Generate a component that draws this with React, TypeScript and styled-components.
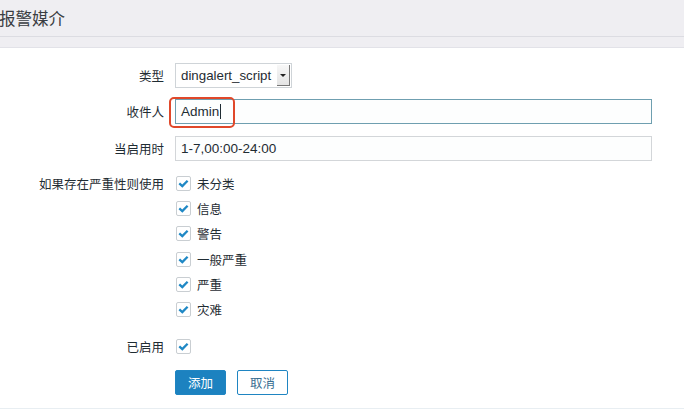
import styled, { createGlobalStyle } from "styled-components"

const GlobalStyle = createGlobalStyle`
    html, body {
        margin: 0;
        padding: 0;
        background: #ffffff;
    }
    body {
        font-family: "Liberation Sans", "Noto Sans CJK SC", sans-serif;
        color: #1f2c33;
    }
`

const Page = styled.div`
    width: 684px;
    height: 412px;
    overflow: hidden;
    background: #ffffff;
`

const Header = styled.div`
    height: 36px;
    background: #efeef2;
    border-bottom: 1px solid #dcdce2;
    display: flex;
    align-items: center;
`

const Title = styled.h1`
    margin: 0;
    margin-left: -1px;
    font-size: 16.5px;
    font-weight: 400;
    color: #3a3d42;
    font-family: "Noto Sans CJK SC", sans-serif;
`

const SubBar = styled.div`
    height: 10px;
    background: #efeef2;
    border-bottom: 1px solid #e2e2e8;
`

const FormArea = styled.div`
    height: 361px;
    border-bottom: 1px solid #e8eef2;
    padding-top: 15px;
    box-sizing: border-box;
`

const Row = styled.div<{ $gap?: number }>`
    display: grid;
    grid-template-columns: 164px 1fr;
    column-gap: 11px;
    align-items: start;
    margin-bottom: ${(p) => p.$gap ?? 11}px;
`

const Label = styled.div`
    text-align: right;
    font-size: 12.5px;
    line-height: 25px;
    color: #1f2c33;
    font-family: "Noto Sans CJK SC", sans-serif;
`

const SelectBox = styled.div`
    width: 117px;
    height: 25px;
    box-sizing: border-box;
    border: 1px solid #cfd4d8;
    background: #ffffff;
    display: flex;
    align-items: center;
    justify-content: space-between;
    padding-left: 5px;
    font-size: 13.3px;
    color: #1f2c33;
`

const SelectArrow = styled.div`
    width: 13px;
    height: 21px;
    margin-right: 1px;
    box-sizing: border-box;
    background: linear-gradient(#f7f7f7, #e4e4e4);
    border-right: 1px solid #777;
    border-bottom: 1px solid #777;
    display: flex;
    align-items: center;
    justify-content: center;

    &::after {
        content: "";
        border-left: 3px solid transparent;
        border-right: 3px solid transparent;
        border-top: 3px solid #222;
    }
`

const InputWrap = styled.div`
    position: relative;
    width: 477px;
`

const TextInput = styled.div<{ $focused?: boolean }>`
    width: 477px;
    height: 25px;
    box-sizing: border-box;
    border: 1px solid ${(p) => (p.$focused ? "#6f9fb0" : "#d3d6d9")};
    background: #fdfefe;
    display: flex;
    align-items: center;
    padding-left: 5px;
    font-size: 13.5px;
    color: #1f2c33;
`

const Caret = styled.span`
    display: inline-block;
    width: 1px;
    height: 15px;
    background: #1f2c33;
    margin-left: 1px;
`

const Highlight = styled.div`
    position: absolute;
    left: -6px;
    top: -2px;
    width: 66px;
    height: 31px;
    box-sizing: border-box;
    border: 2px solid #e0482a;
    border-radius: 5px;
    pointer-events: none;
`

const CheckList = styled.div`
    display: flex;
    flex-direction: column;
`

const CheckItem = styled.div`
    display: flex;
    align-items: center;
    height: 25.2px;
    gap: 6px;
    font-size: 12.5px;
    font-family: "Noto Sans CJK SC", sans-serif;
    color: #1f2c33;
`

const Box = styled.span`
    width: 15px;
    height: 15px;
    box-sizing: border-box;
    border: 1px solid #c9ced2;
    border-radius: 2px;
    background: #ffffff;
    display: inline-flex;
    align-items: center;
    justify-content: center;
    margin-left: 1px;
`

const Buttons = styled.div`
    display: flex;
    gap: 11px;
`

const Button = styled.button<{ $primary?: boolean }>`
    width: 51px;
    height: 25px;
    box-sizing: border-box;
    border: 1px solid #1f85c2;
    border-radius: 2px;
    background: ${(p) => (p.$primary ? "#1c82c0" : "#ffffff")};
    color: ${(p) => (p.$primary ? "#ffffff" : "#3a6f92")};
    font-size: 12.5px;
    font-family: "Noto Sans CJK SC", sans-serif;
    padding: 0;
    cursor: pointer;
`

function Check() {
    return (
        <Box>
            <svg width="11" height="9" viewBox="0 0 11 9">
                <path d="M1.3 4.4 L4.3 7.1 L9.6 1.7" fill="none" stroke="#1f88c5" strokeWidth="2.3" />
            </svg>
        </Box>
    )
}

const severities = ["未分类", "信息", "警告", "一般严重", "严重", "灾难"]

export default function App() {
    return (
        <Page>
            <GlobalStyle />
            <Header>
                <Title>报警媒介</Title>
            </Header>
            <SubBar />
            <FormArea>
                <Row>
                    <Label>类型</Label>
                    <SelectBox>
                        dingalert_script
                        <SelectArrow />
                    </SelectBox>
                </Row>
                <Row $gap={12}>
                    <Label>收件人</Label>
                    <InputWrap>
                        <TextInput $focused>
                            Admin<Caret />
                        </TextInput>
                        <Highlight />
                    </InputWrap>
                </Row>
                <Row $gap={10}>
                    <Label>当启用时</Label>
                    <TextInput>1-7,00:00-24:00</TextInput>
                </Row>
                <Row $gap={12}>
                    <Label>如果存在严重性则使用</Label>
                    <CheckList>
                        {severities.map((s) => (
                            <CheckItem key={s}>
                                <Check />
                                {s}
                            </CheckItem>
                        ))}
                    </CheckList>
                </Row>
                <Row $gap={11}>
                    <Label>已启用</Label>
                    <CheckList>
                        <CheckItem>
                            <Check />
                        </CheckItem>
                    </CheckList>
                </Row>
                <Row>
                    <div />
                    <Buttons>
                        <Button $primary>添加</Button>
                        <Button>取消</Button>
                    </Buttons>
                </Row>
            </FormArea>
        </Page>
    )
}
